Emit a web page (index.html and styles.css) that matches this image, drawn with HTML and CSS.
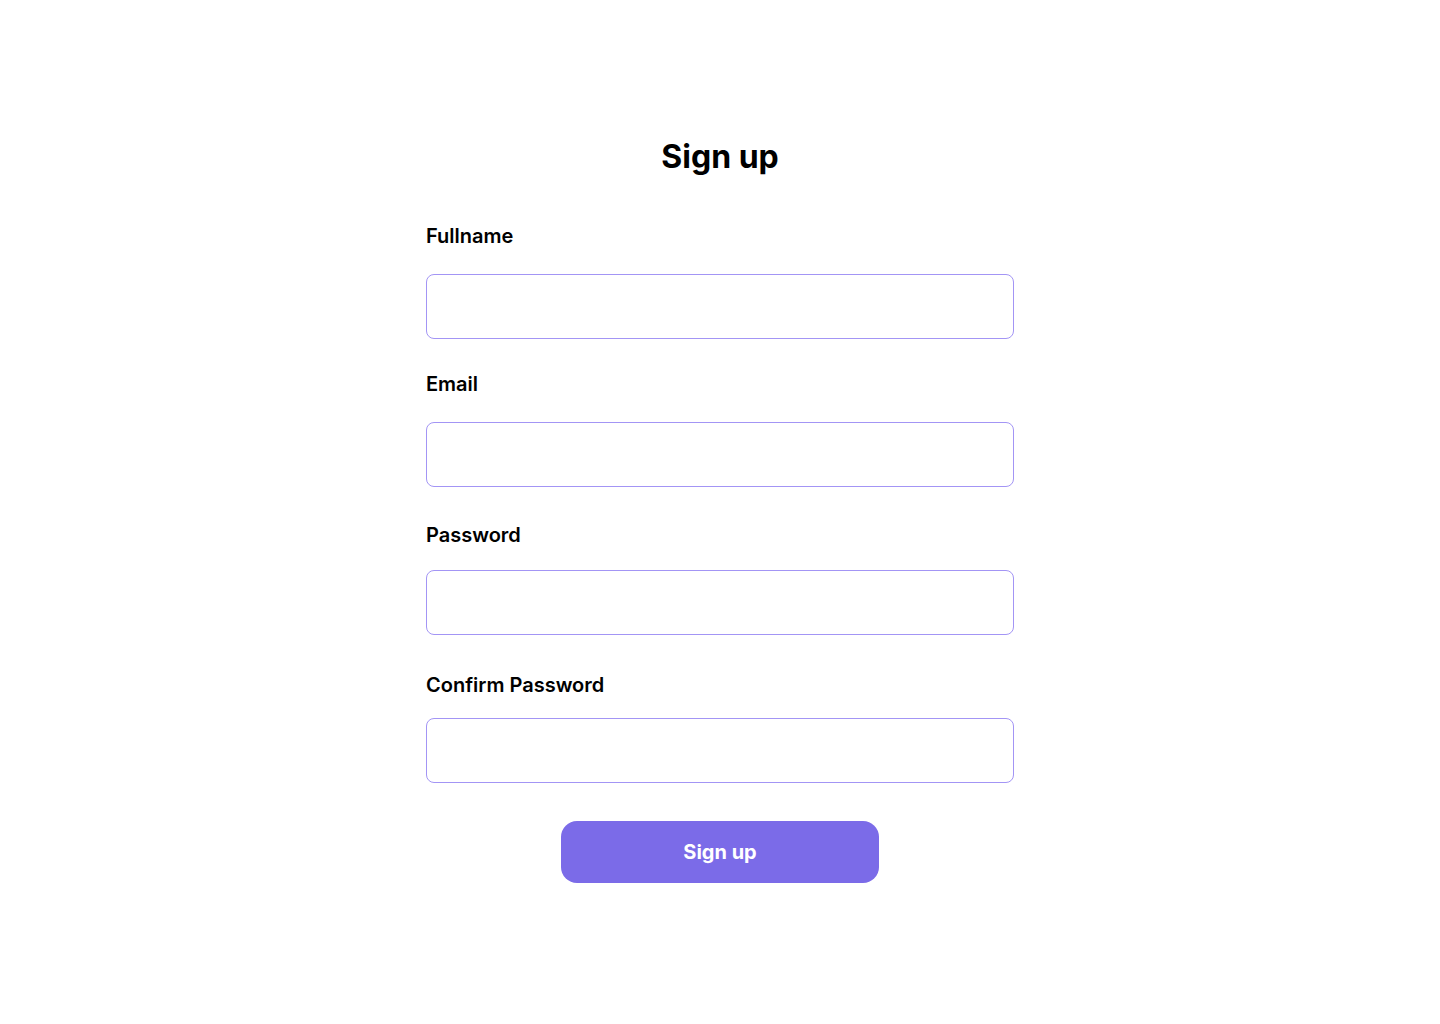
FILE: index.html
```html
<!DOCTYPE html>
<html lang="en">
<head>
  <meta charset="UTF-8">
  <meta name="viewport" content="width=device-width, initial-scale=1.0">
  <title>Sign up</title>
  <link rel="stylesheet" href="styles.css">
</head>
<body>
  <main class="signup">
    <h1>Sign up</h1>

    <form class="signup-form">
      <div class="field">
        <label for="fullname">Fullname</label>
        <input type="text" id="fullname">
      </div>

      <div class="field">
        <label for="email">Email</label>
        <input type="email" id="email">
      </div>

      <div class="field">
        <label for="password">Password</label>
        <input type="password" id="password">
      </div>

      <div class="field">
        <label for="confirm">Confirm Password</label>
        <input type="password" id="confirm">
      </div>

      <button type="submit">Sign up</button>
    </form>
  </main>
</body>
</html>
```

FILE: styles.css
```css
body {
  font-family: Inter, 'Noto Sans', sans-serif;
  color: #000;
  background: #fff;
  margin: 0;
}
.signup {
  width: 588px;
  margin: 0 auto;
  padding-top: 137px;
}
h1 {
  font-size: 32px;
  line-height: 40px;
  font-weight: 700;
  text-align: center;
  margin: 0 0 47px;
}
.signup-form {
  display: flex;
  flex-direction: column;
}
.field {
  display: flex;
  flex-direction: column;
  height: 148px;
}
.field label {
  font-size: 20px;
  line-height: 24px;
  font-weight: 600;
  margin-bottom: 26px;
}
.field:nth-child(3) label {
  margin-top: 3px;
  margin-bottom: 23px;
}
.field:nth-child(4) label {
  margin-top: 5px;
  margin-bottom: 21px;
}
.field input {
  height: 65px;
  box-sizing: border-box;
  border: 1px solid #a395f5;
  border-radius: 8px;
  padding: 0 16px;
  font-family: inherit;
  font-size: 18px;
  outline: none;
}
button {
  align-self: center;
  width: 318px;
  height: 62px;
  margin-top: 5px;
  background-color: #7b6be8;
  color: #fff;
  border: none;
  border-radius: 16px;
  font-family: inherit;
  font-size: 20px;
  font-weight: 700;
  cursor: pointer;
}
```
